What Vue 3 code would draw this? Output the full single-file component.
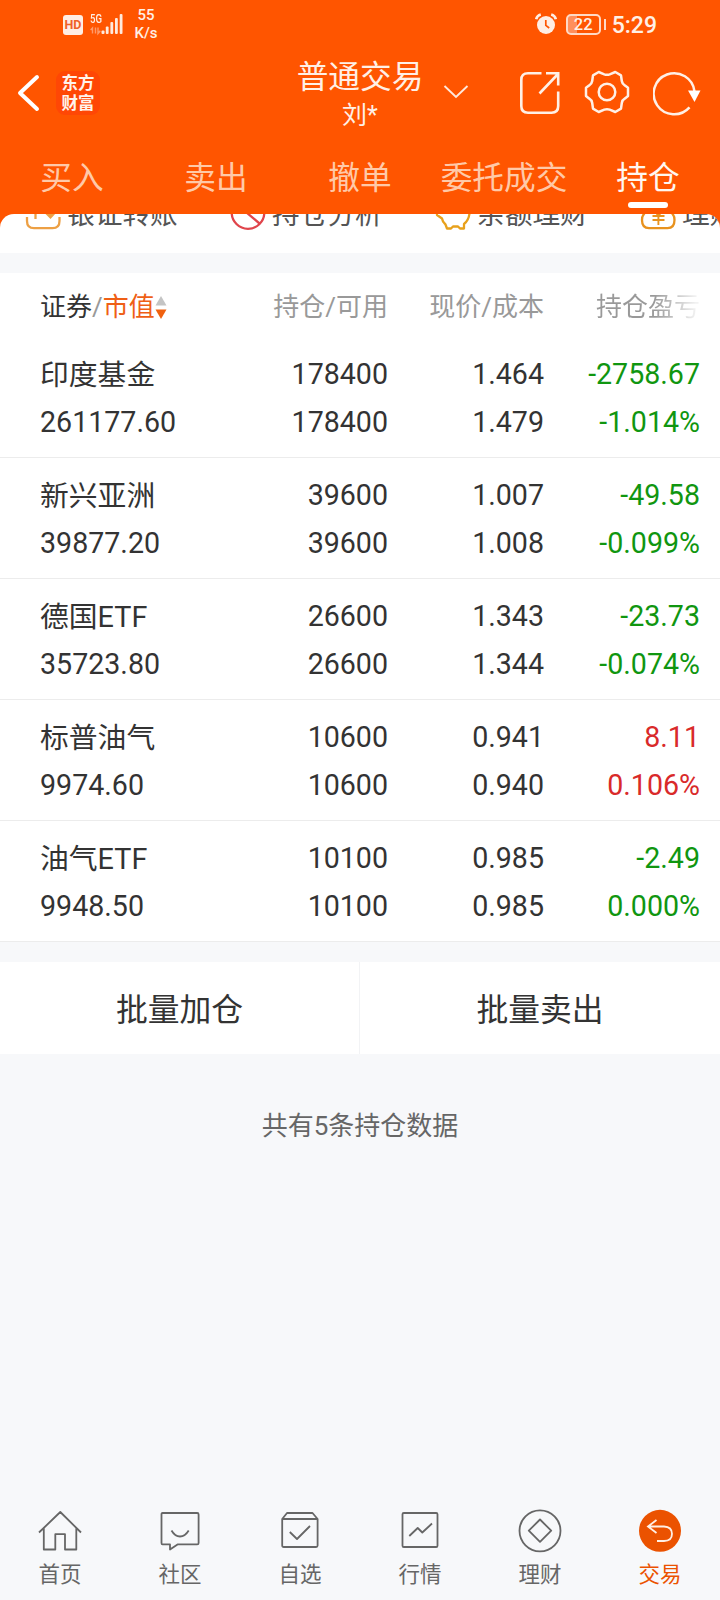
<script setup>
const tabs = ['买入', '卖出', '撤单', '委托成交', '持仓']

const shortcuts = [
  { icon: 'transfer', label: '银证转账' },
  { icon: 'analysis', label: '持仓分析' },
  { icon: 'piggy', label: '余额理财' },
  { icon: 'yuan', label: '理财' },
]

const holdings = [
  { name: '印度基金', value: '261177.60', held: '178400', free: '178400', price: '1.464', cost: '1.479', gain: '-2758.67', rate: '-1.014%', up: false },
  { name: '新兴亚洲', value: '39877.20', held: '39600', free: '39600', price: '1.007', cost: '1.008', gain: '-49.58', rate: '-0.099%', up: false },
  { name: '德国ETF', value: '35723.80', held: '26600', free: '26600', price: '1.343', cost: '1.344', gain: '-23.73', rate: '-0.074%', up: false },
  { name: '标普油气', value: '9974.60', held: '10600', free: '10600', price: '0.941', cost: '0.940', gain: '8.11', rate: '0.106%', up: true },
  { name: '油气ETF', value: '9948.50', held: '10100', free: '10100', price: '0.985', cost: '0.985', gain: '-2.49', rate: '0.000%', up: false },
]

const nav = [
  { icon: 'home', label: '首页' },
  { icon: 'chat', label: '社区' },
  { icon: 'pick', label: '自选' },
  { icon: 'chart', label: '行情' },
  { icon: 'wealth', label: '理财' },
  { icon: 'trade', label: '交易' },
]
</script>

<template>
  <div class="app">
    <header class="top">
      <div class="status">
        <div class="status-left">
          <span class="hd">HD</span>
          <div class="signal">
            <span class="gen">5G</span>
            <svg width="34" height="24" viewBox="0 0 34 24">
              <g fill="none" stroke="#ff9a6a" stroke-width="1.4">
                <path d="M2.500 21.500V16L0.600 18M5.500 15.500V21.500M8 15.500v6l2.300-2.800" />
              </g>
              <g fill="#ffeadd">
                <rect x="11.500" y="18.500" width="3" height="3.500" rx="1" />
                <rect x="15.800" y="14.500" width="2.800" height="7.500" rx="1" />
                <rect x="20.400" y="10" width="2.800" height="12" rx="1" />
                <rect x="25" y="6" width="2.800" height="16" rx="1" />
                <rect x="29.700" y="2" width="2.800" height="20" rx="1" />
              </g>
            </svg>
          </div>
          <div class="speed"><span>55</span><span>K/s</span></div>
        </div>
        <div class="status-right">
          <svg class="alarm" width="22" height="22" viewBox="0 0 22 22">
            <circle cx="11" cy="12" r="9" fill="#ffeee4" />
            <path d="M1.200 6.200Q2 2.500 5.800 1.500M20.800 6.200Q20 2.500 16.200 1.500" fill="none" stroke="#ffeee4" stroke-width="2.600" />
            <path d="M10.800 7v5.300l3.400 2.700" fill="none" stroke="#ff5500" stroke-width="1.700" />
          </svg>
          <div class="battery"><span>22</span></div>
          <i class="battery-tip"></i>
          <span class="clock">5:29</span>
        </div>
      </div>

      <div class="titlebar">
        <div class="title-left">
          <svg width="24" height="38" viewBox="0 0 24 38">
            <path d="M21 3L4 19L21 35" fill="none" stroke="#fff" stroke-width="4" stroke-linecap="round" stroke-linejoin="round" />
          </svg>
          <div class="logo"><span>东方</span><span>财富</span></div>
        </div>
        <div class="title">
          <h1>普通交易</h1>
          <p>刘*</p>
        </div>
        <div class="title-right">
          <svg class="caret" width="26" height="16" viewBox="0 0 26 16">
            <path d="M1.500 2L13 13L24.500 2" fill="none" stroke="#ffe9dc" stroke-width="1.900" />
          </svg>
          <svg class="share" width="42" height="44" viewBox="0 0 42 44" fill="none" stroke="#fff0e6" stroke-width="2.600">
            <path d="M22.500 2.300H9Q2.300 2.300 2.300 9V35Q2.300 41.700 9 41.700H32.500Q39.200 41.700 39.200 35V20.500" />
            <path d="M20.500 22.500L38.500 3.500M27 2.300H39.200V14.500" />
          </svg>
          <svg class="gear" width="46" height="46" viewBox="0 0 46 46" fill="none" stroke="#fff0e6" stroke-width="2.500" stroke-linejoin="round">
            <path d="M14.700 3L20.300 5.300Q23 6.300 25.700 5.300L31.300 3L37 6.300L37.800 12Q38.200 15 41 16.600L44 18.800V27L41 29.400Q38.200 31 37.800 34L37 39.700L31.300 43L25.700 40.700Q23 39.700 20.300 40.700L14.700 43L9 39.700L8.200 34Q7.800 31 5 29.400L2 27V18.800L5 16.600Q7.800 15 8.200 12L9 6.300Z" />
            <circle cx="23" cy="23" r="8.300" />
          </svg>
          <svg class="refresh" width="50" height="46" viewBox="0 0 50 46">
            <path d="M36.500 37.300A20.500 20.500 0 1 1 41.500 21.500" fill="none" stroke="#fff0e6" stroke-width="2.500" />
            <path d="M35 20.500H47.500L41.500 32Z" fill="#fff" />
          </svg>
        </div>
      </div>

      <nav class="tabs">
        <span v-for="(tab, i) in tabs" :key="tab" :class="{ active: i === 4 }">{{ tab }}</span>
      </nav>
    </header>

    <div class="shortcut-wrap">
      <div class="shortcuts">
        <div v-for="(item, i) in shortcuts" :key="i" class="shortcut">
          <svg width="36" height="36" viewBox="0 0 36 36" fill="none" stroke-width="2.300">
            <g v-if="item.icon === 'transfer'" stroke="#eda044">
              <path d="M2 22V26Q2 33.200 9 33.200H27.500Q34.500 33.200 34.500 26V22" />
              <path d="M10.500 24V12" />
              <path d="M18.500 17H32L25.500 24Z" fill="#eda044" stroke="none" />
            </g>
            <g v-else-if="item.icon === 'analysis'" stroke="#e0454c">
              <circle cx="18" cy="17.500" r="16.300" /><path d="M10 12L29.500 28.500" />
            </g>
            <g v-else-if="item.icon === 'piggy'" stroke="#e8a11c" stroke-linejoin="round">
              <path d="M2 14V20L7 23.500Q7.500 27 10.500 29.500L12 33.500H16L18 31.500H23L25 33.500H29V29Q34 25 34.500 18Q33 5 19 5Q9 5 6 11Z" />
            </g>
            <g v-else stroke="#e8921e">
              <path d="M4 19Q2 21 2 25Q2 33.200 9 33.200H27.500Q34.500 33.200 34.500 25Q34.500 21 32.500 19V7H4Z" />
              <path d="M12.500 21H24.500M12.500 25H24.500M18.400 20V30M13.500 15L18.400 20.500L23.500 15" stroke-width="1.900" />
            </g>
          </svg>
          <span>{{ item.label }}</span>
        </div>
      </div>
    </div>

    <main class="panel">
      <div class="grid head">
        <div class="sort">
          <span class="strong">证券</span><span>/</span><span class="hot">市值</span>
          <svg width="12" height="24" viewBox="0 0 11 24">
            <path d="M5.500 0L11 9.500H0Z" fill="#c4c4c4" /><path d="M0 13.500H11L5.500 23Z" fill="#f0610f" />
          </svg>
        </div>
        <div>持仓/可用</div>
        <div>现价/成本</div>
        <div class="fade">持仓盈亏</div>
      </div>
      <div v-for="row in holdings" :key="row.name" class="grid row">
        <div><p class="name">{{ row.name }}</p><p>{{ row.value }}</p></div>
        <div><p>{{ row.held }}</p><p>{{ row.free }}</p></div>
        <div><p>{{ row.price }}</p><p>{{ row.cost }}</p></div>
        <div :class="row.up ? 'up' : 'down'"><p>{{ row.gain }}</p><p>{{ row.rate }}</p></div>
      </div>
    </main>

    <div class="batch">
      <div>批量加仓</div>
      <div>批量卖出</div>
    </div>
    <p class="count">共有5条持仓数据</p>

    <footer class="bottom">
      <div v-for="item in nav" :key="item.icon" :class="['nav-item', { on: item.icon === 'trade' }]">
        <svg width="44" height="44" viewBox="0 0 44 44" fill="none" stroke="#666" stroke-width="1.800" stroke-linejoin="round">
          <g v-if="item.icon === 'home'">
            <path d="M1 23.500L22.300 3L43 23.500M5.800 19V40.500H17.300V25.200H27V40.500H38.300V19" />
          </g>
          <g v-else-if="item.icon === 'chat'">
            <path d="M4.500 4H39.200Q40.600 4 40.600 5.400V34Q40.600 35.400 39.200 35.400H19.500L12 40.500V35.400H4.500Q3.500 35.400 3.500 34V5.400Q3.500 4 4.500 4Z" />
            <path d="M13.500 21.500Q17 27.500 22 27.500T30.700 21.500" />
          </g>
          <g v-else-if="item.icon === 'pick'">
            <path d="M4.200 10L9 4H34.500L39.600 10V36.500Q39.600 38 38.100 38H5.700Q4.200 38 4.200 36.500ZM4.200 10H39.600" />
            <path d="M11.800 23L19 30L32 17" />
          </g>
          <g v-else-if="item.icon === 'chart'">
            <rect x="4.500" y="4" width="35" height="34" rx="1.300" />
            <path d="M11.300 27L19.700 19L24.300 23.500L34 14.500" />
          </g>
          <g v-else-if="item.icon === 'wealth'">
            <circle cx="22" cy="21.800" r="20.500" />
            <path d="M22 10.500L33.200 21.700L22 32.900L10.800 21.700Z" />
          </g>
          <g v-else stroke="#fff0e6" stroke-linejoin="miter">
            <circle cx="22" cy="21.800" r="21" fill="#eb5200" stroke="none" />
            <path d="M18.500 11L10 17.500L18.500 24M10.500 17.500H26Q34 18 34 24.800Q34 32 26 32H19" />
          </g>
        </svg>
        <span>{{ item.label }}</span>
      </div>
    </footer>
  </div>
</template>

<style>
body { background: #f7f8fa; }
</style>

<style scoped>
* { box-sizing: border-box; margin: 0; padding: 0; }
.app {
  width: 720px; height: 1600px; display: flex; flex-direction: column; overflow: hidden;
  background: #f7f8fa; color: #333;
  font-family: Roboto, "Noto Sans CJK SC", sans-serif;
}
svg { display: block; flex: none; }

.top { height: 214px; background: #ff5500; color: #fff0e6; flex: none; }
.status { height: 50px; display: flex; justify-content: space-between; padding: 0 64px 0 63px; }
.status-left, .status-right { display: flex; }
.hd {
  width: 20px; height: 20px; margin-top: 15px; border-radius: 3px; background: #ffeee4; color: #ef6128;
  font-size: 12.500px; font-weight: 700; line-height: 20px; text-align: center;
}
.signal { display: grid; margin: 12px 0 0 7px; width: 34px; height: 24px; }
.signal > * { grid-area: 1 / 1; }
.gen { font: 500 12px/15px Roboto, sans-serif; transform: scaleX(.8); transform-origin: left; }
.speed { display: flex; flex-direction: column; align-items: center; margin: 6px 0 0 10px; font-size: 15px; line-height: 18px; font-weight: 500; }
.speed span { width: 24px; text-align: center; white-space: nowrap; }
.alarm { margin-top: 13px; }
.battery {
  width: 35px; height: 21px; margin: 14px 0 0 9px; border: 2px solid #ffd9c5; border-radius: 5px;
  background: linear-gradient(90deg, #ff8f5c 9px, transparent 9px);
  font-size: 16.500px; font-weight: 500; line-height: 17.500px; text-align: center;
}
.battery-tip { width: 2px; height: 11px; margin: 19px 0 0 3px; background: #ffd9c5; }
.clock { margin: 0 -1px 0 6px; font-size: 23px; font-weight: 500; line-height: 51px; }

.titlebar { height: 90px; display: grid; grid-template-columns: 240px 200px 280px; }
.title-left { display: flex; padding-left: 16px; }
.title-left svg { margin-top: 24px; }
.logo {
  width: 44px; height: 44px; margin: 21px 0 0 16px; padding-top: 1px; border-radius: 9px; background: #ff4705;
  display: flex; flex-direction: column; align-items: center;
  font: 700 16.500px/20px "Noto Sans CJK SC", sans-serif; color: #fff4ec;
}
.logo span { height: 20px; }
.title { width: 240px; text-align: center; }
.title h1 { font-size: 31.700px; font-weight: 400; line-height: 40px; margin-top: 8px; }
.title p { font-size: 25px; line-height: 34px; margin-top: 1px; }
.title-right { display: flex; }
.caret { margin: 34px 0 0 3px; }
.share { margin: 21px 0 0 50px; }
.gear { margin: 19px 0 0 23px; }
.refresh { margin: 20px 0 0 23px; }

.tabs { height: 74px; display: grid; grid-template-columns: repeat(5, 1fr); text-align: center; font-size: 31.700px; line-height: 78px; color: #ffc9a8; }
.tabs span { position: relative; height: 74px; }
.tabs .active { color: #fff7f0; }
.tabs .active::after { content: ""; position: absolute; left: 52px; bottom: 6px; width: 40px; height: 6px; border-radius: 3px; background: #fff; }

.shortcut-wrap { height: 39px; flex: none; background: linear-gradient(#ff5500 14px, #fff 14px); }
.shortcuts { height: 39px; overflow: hidden; border-radius: 14px 14px 0 0; background: #fff; display: flex; padding-left: 25px; }
.shortcut { flex: 0 0 205px; height: 36px; margin-top: -19px; display: flex; gap: 6px; color: #555; }
.shortcut span { font-size: 27.700px; line-height: 39px; white-space: nowrap; }

.panel { margin-top: 20px; background: #fff; flex: none; }
.grid { display: grid; grid-template-columns: 188px 160px 156px 156px; padding-left: 40px; text-align: right; }
.grid > :first-child { text-align: left; }
.head { height: 64px; font-size: 26px; line-height: 69px; color: #999; }
.sort { display: flex; align-items: center; height: 69px; }
.sort .strong { color: #333; }
.sort .hot { color: #ef5f16; }
.fade { background: linear-gradient(90deg, #999 0, #999 110px, #f2f2f2 152px); -webkit-background-clip: text; background-clip: text; color: transparent; }
.row { height: 121px; padding-top: 13px; border-bottom: 1px solid #ececec; font-size: 28.600px; line-height: 48px; }
.row p { height: 48px; }
.row .name { font-size: 28.800px; line-height: 50px; }
.up { color: #d92a2a; }
.down { color: #109610; }

.batch { height: 92px; margin-top: 20px; flex: none; display: grid; grid-template-columns: 1fr 1fr; background: #fff; text-align: center; font-size: 31.800px; line-height: 96px; }
.batch div { height: 92px; }
.batch div:first-child { border-right: 1px solid #f2f3f5; }
.count { margin-top: 54px; text-align: center; font-size: 26px; line-height: 36px; color: #666; }

.bottom { margin-top: auto; height: 91px; flex: none; display: grid; grid-template-columns: repeat(6, 1fr); }
.nav-item { display: flex; flex-direction: column; align-items: center; font-size: 21.500px; line-height: 30px; color: #666; }
.nav-item span { margin-top: 7px; }
.on { color: #eb5200; }
</style>
